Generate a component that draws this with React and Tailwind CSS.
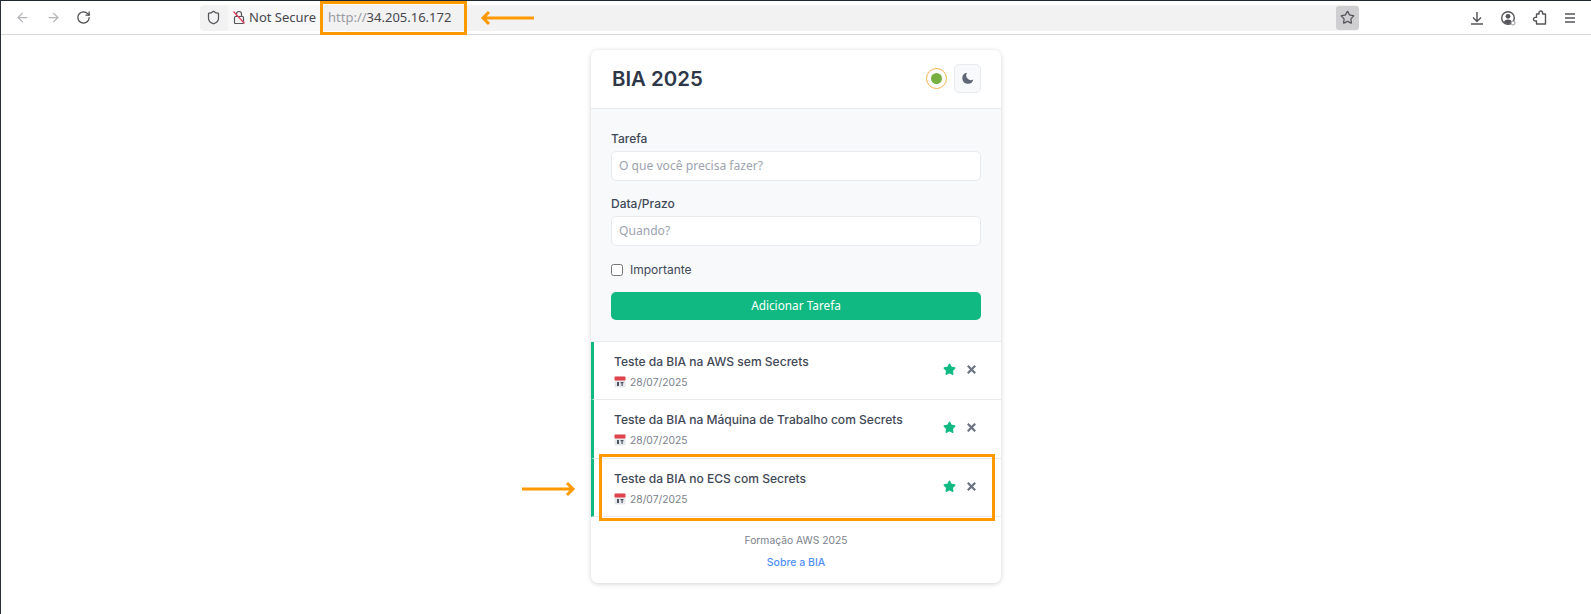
import { ArrowLeft, ArrowRight, RotateCw, Shield, Star } from "lucide-react";

const inter = "font-['Inter',sans-serif]";
const ubuntuLike = "font-['Noto_Sans',sans-serif]";

const tasks = [
    "Teste da BIA na AWS sem Secrets",
    "Teste da BIA na Máquina de Trabalho com Secrets",
    "Teste da BIA no ECS com Secrets",
];

function CalendarIcon() {
    return (
        <svg width="12" height="12" viewBox="0 0 12 12" className="shrink-0">
            <rect x="0.5" y="0.5" width="11" height="11" rx="1" fill="#e5e7eb" />
            <rect x="0.5" y="0.5" width="11" height="4" rx="1" fill="#e0434b" />
            <rect x="3" y="6" width="2" height="4" fill="#4b5563" />
            <rect x="6.5" y="6" width="3" height="1.2" fill="#4b5563" />
            <rect x="7.5" y="7" width="1.2" height="3" fill="#4b5563" />
        </svg>
    );
}

function TaskItem({ title }) {
    return (
        <div className="flex h-[58.3px] items-start justify-between border-b border-[#e8eaee] border-l-[3px] border-l-[#10b981] pt-[10px] pl-[20px] pr-[23px]">
            <div>
                <div className="text-[12.05px] leading-[20px] font-medium text-[#3f4856]">{title}</div>
                <div className="flex items-center gap-[4px] text-[10.3px] leading-[20px] text-[#7b818c]">
                    <CalendarIcon />
                    <span>28/07/2025</span>
                </div>
            </div>
            <div className="mt-[11px] flex items-center gap-[9px]">
                <Star size={13} className="fill-[#10b981] text-[#10b981]" />
                <svg width="13" height="13" viewBox="0 0 13 13" fill="none">
                    <path d="M2.8 2.8l7.4 7.4M10.2 2.8l-7.4 7.4" stroke="#6b7280" strokeWidth="2.2" />
                </svg>
            </div>
        </div>
    );
}

function Field({ label, placeholder }) {
    return (
        <div>
            <div className={`${inter} text-[12px] leading-[18px] font-medium text-[#3f4856]`}>{label}</div>
            <input
                placeholder={placeholder}
                className={`${ubuntuLike} mt-[3px] block h-[29.5px] w-full rounded-[5px] border border-[#e8eaee] bg-white px-[7px] text-[12.1px] placeholder:text-[#9ca3af]`}
            />
        </div>
    );
}

export default function App() {
    return (
        <div className="relative h-[614px] overflow-hidden border-l border-t border-l-[#2b2f36] border-t-[#1f2733] bg-white">
            {/* browser toolbar */}
            <div className={`${ubuntuLike} flex h-[34px] items-center border-b border-[#d9d9dc] bg-white pl-[14px]`}>
                <ArrowLeft size={15} className="text-[#b4b4b8]" />
                <ArrowRight size={15} className="ml-[16px] text-[#b4b4b8]" />
                <RotateCw size={15} className="ml-[15px] text-[#4a4a4f]" />
                <div className="ml-[109px] flex h-[26px] w-[1159px] items-center rounded-[4px] bg-[#f2f2f3]">
                    <Shield size={15} className="ml-[6px] text-[#55555a]" />
                    <div className="ml-[7px] flex h-full items-center gap-[3px] bg-[#f8f8f9] pl-[4px] pr-[4px] text-[13px] text-[#47474c]">
                        <svg width="14" height="15" viewBox="0 0 14 15" fill="none">
                            <rect x="2.5" y="6.5" width="9" height="7" rx="1" stroke="#55555a" strokeWidth="1.2" />
                            <path d="M4.5 6.5V4a2.5 2.5 0 0 1 5 0v2.5" stroke="#55555a" strokeWidth="1.2" />
                            <path d="M1.5 1.5l11 12" stroke="#e0435c" strokeWidth="1.3" />
                        </svg>
                        <span>Not Secure</span>
                    </div>
                    <div className="ml-[8px] text-[13px] text-[#9a9a9f]">
                        http://<span className="text-[#47474c]">34.205.16.172</span>
                    </div>
                    <div className="ml-auto flex h-[24px] w-[23px] items-center justify-center rounded-[3px] bg-[#cfcfd2]">
                        <Star size={15} className="text-[#55555a]" />
                    </div>
                </div>
                <div className="ml-[110px] flex items-center gap-[15px]">
                    <svg width="16" height="16" viewBox="0 0 16 16" fill="none" stroke="#55555a" strokeWidth="1.4">
                        <path d="M8 2v9M4 7.5l4 4 4-4M2 14h12" />
                    </svg>
                    <svg width="16" height="16" viewBox="0 0 16 16" fill="none">
                        <circle cx="8" cy="8" r="6.3" stroke="#55555a" strokeWidth="1.4" />
                        <circle cx="8" cy="6.3" r="2.4" fill="#55555a" />
                        <path d="M3.8 12.2c.8-2 2.400-2.700 4.200-2.700s3.400.7 4.200 2.700a6 6 0 0 1-8.400 0z" fill="#55555a" />
                        <circle cx="13" cy="13" r="2" fill="#fff" stroke="#9a9a9f" />
                    </svg>
                    <svg width="16" height="16" viewBox="0 0 16 16" fill="none" stroke="#55555a" strokeWidth="1.4" strokeLinejoin="round">
                        <path d="M8 4V2.800a1.800 1.800 0 0 1 3.600 0V4h2.900v10H5.500v-3H4.300a1.800 1.800 0 0 1 0-3.600h1.200V4z" />
                    </svg>
                    <svg width="16" height="16" viewBox="0 0 16 16" fill="none" stroke="#55555a" strokeWidth="1.4">
                        <path d="M3 4h10M3 8h10M3 12h10" />
                    </svg>
                </div>
            </div>

            {/* card */}
            <div className={`${inter} mx-auto mt-[15px] w-[410px] overflow-hidden rounded-[7px] bg-white shadow-[0_1px_5px_rgba(0,0,0,0.18)]`}>
                <div className="flex h-[59px] items-center justify-between border-b border-[#e8eaee] pl-[21px] pr-[20px]">
                    <div className="text-[20.4px] font-semibold text-[#2d3748]">BIA 2025</div>
                    <div className="-mt-[1px] flex items-center gap-[7px]">
                        <div className="flex h-[21px] w-[21px] items-center justify-center rounded-full border-[1.5px] border-[#f5b14c]">
                            <div className="h-[11px] w-[11px] rounded-full bg-[#76b041]" />
                        </div>
                        <div className="flex h-[29px] w-[27px] items-center justify-center rounded-[5px] border border-[#e8eaee] bg-[#f8f9fb]">
                            <svg width="14" height="14" viewBox="0 0 24 24" fill="#5f6675" className="-mt-[2px]">
                                <path d="M21 14.500A9.500 9.500 0 1 1 10.500 3a8 8 0 0 0 10.500 11.500z" />
                            </svg>
                        </div>
                    </div>
                </div>

                <div className="h-[233px] border-b border-[#e8eaee] bg-[#f8f9fb] pl-[20px] pr-[20px] pt-[21px]">
                    <Field label="Tarefa" placeholder="O que você precisa fazer?" />
                    <div className="mt-[14.5px]">
                        <Field label="Data/Prazo" placeholder="Quando?" />
                    </div>
                    <label className="mt-[14px] flex items-center gap-[7px] text-[12px] leading-[20px] text-[#3f4856]">
                        <input type="checkbox" className="h-[12px] w-[12px]" />
                        Importante
                    </label>
                    <button className={`${ubuntuLike} mt-[12px] h-[28px] w-full rounded-[5px] bg-[#10b981] text-[11.8px] text-white`}>
                        Adicionar Tarefa
                    </button>
                </div>

                {tasks.map((t) => (
                    <TaskItem key={t} title={t} />
                ))}

                <div className="flex h-[66px] flex-col items-center pt-[13px] text-[#7b818c]">
                    <div className="text-[10.3px] leading-[20px]">Formação AWS 2025</div>
                    <div className="mt-[3px] text-[10.5px] leading-[20px] font-medium text-[#4f8ff7]">Sobre a BIA</div>
                </div>
            </div>

            {/* orange highlights drawn over the screenshot */}
            <div className="absolute left-[319px] top-0 h-[34px] w-[147px] border-[3px] border-[#ff9900]" />
            <div className="absolute left-[598px] top-[453px] h-[67px] w-[395.5px] border-[3px] border-[#ff9900]" />
            <svg className="absolute left-[479px] top-[9px]" width="56" height="16" viewBox="0 0 56 16" fill="none">
                <path d="M54 8H3M9 2L3 8l6 6" stroke="#ff9900" strokeWidth="3" />
            </svg>
            <svg className="absolute left-[520px] top-[480px]" width="56" height="16" viewBox="0 0 56 16" fill="none">
                <path d="M1 8h51M46 2l6 6-6 6" stroke="#ff9900" strokeWidth="3" />
            </svg>
        </div>
    );
}
